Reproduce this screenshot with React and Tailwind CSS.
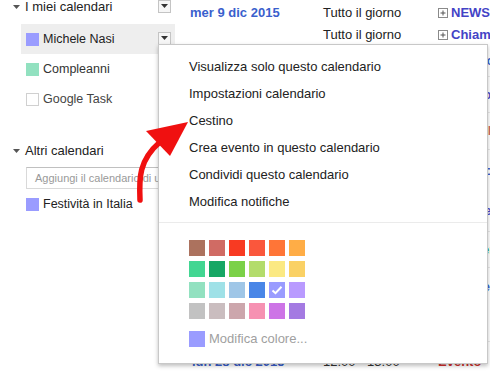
import React from "react";

const Tri = ({ fill = "#444" }) => (
  <svg width="7" height="4" viewBox="0 0 7 4"><path d="M0 0H7L3.5 4Z" fill={fill} /></svg>
);

const DropBtn = () => (
  <div className="w-[13px] h-[13px] border border-[#c4c4c4] bg-[#f6f6f6] flex items-center justify-center">
    <Tri fill="#333" />
  </div>
);

const PlusBox = () => (
  <svg width="10" height="10" viewBox="0 0 10 10" className="shrink-0">
    <rect x="0.5" y="0.5" width="9" height="9" fill="#fff" stroke="#8a8a8a" />
    <path d="M2.5 5H7.5M5 2.5V7.5" stroke="#555" strokeWidth="1" />
  </svg>
);

const colors = [
  ["#ac725e", "#d06b64", "#f83a22", "#fa573c", "#ff7537", "#ffad46"],
  ["#42d692", "#16a765", "#7bd148", "#b3dc6c", "#fbe983", "#fad165"],
  ["#92e1c0", "#9fe1e7", "#9fc6e7", "#4986e7", "#9a9cff", "#b99aff"],
  ["#c2c2c2", "#cabdbf", "#cca6ac", "#f691b2", "#cd74e6", "#a47ae2"],
];

const menuItems = [
  "Visualizza solo questo calendario",
  "Impostazioni calendario",
  "Cestino",
  "Crea evento in questo calendario",
  "Condividi questo calendario",
  "Modifica notifiche",
];

const rows = [
  { h: "h-[31px]", t: "Tutto il giorno", e: "Evento pubblico", c: "text-[#3a5fcd]", b: "border-b border-[#e8e8e8]" },
  { h: "h-[36px]", t: "Tutto il giorno", e: "Riunione settimanale", c: "text-[#4b4bc8]", b: "border-b border-[#e8e8e8]" },
  { h: "h-[37px]", t: "Tutto il giorno", e: "Compleanno di Marco", c: "text-[#d06b64]", b: "border-b border-[#e8e8e8]" },
  { h: "h-[41px]", t: "Tutto il giorno", e: "Immacolata Concezione", c: "text-[#3a5fcd]", b: "" },
  { h: "h-[41px]", t: "Tutto il giorno", e: "Promemoria", c: "text-[#4b4bc8]", b: "border-b border-[#e8e8e8]" },
  { h: "h-[36px]", t: "Tutto il giorno", e: "Scadenza pagamento", c: "text-[#16a765]", b: "border-b border-[#e8e8e8]" },
  { h: "h-[37px]", t: "Tutto il giorno", e: "Natale", c: "text-[#3a5fcd]", b: "" },
  { h: "h-[37px]", t: "Tutto il giorno", e: "Santo Stefano", c: "text-[#3a5fcd]", b: "border-b border-[#e8e8e8]" },
];

export default function App() {
  return (
    <div className="relative w-[490px] h-[374px] overflow-hidden bg-white font-['Liberation_Sans',Arial,sans-serif] text-[#222]">
      <div className="flex h-full">
        {/* Sidebar */}
        <div className="w-[175px] shrink-0 flex flex-col">
          <div className="flex items-center h-[13px] leading-[13px] text-[13px]">
            <div className="w-[13px]" />
            <Tri fill="#555" />
            <span className="ml-[5px]">I miei calendari</span>
            <div className="ml-auto mr-[4px] -mt-[1px]"><DropBtn /></div>
          </div>
          <div className="mt-[11px] ml-[21px] h-[30px] bg-[#eeeeee] flex items-center text-[12.5px] text-[#222]">
            <div className="ml-[5px] w-[13px] h-[13px] bg-[#9a9cff]" />
            <span className="ml-[4px]">Michele Nasi</span>
            <div className="ml-auto mr-[4px] -mt-[2px]"><DropBtn /></div>
          </div>
          <div className="ml-[21px] h-[30px] flex items-center text-[12.5px] text-[#333]">
            <div className="ml-[5px] w-[13px] h-[13px] bg-[#92e1c0]" />
            <span className="ml-[4px]">Compleanni</span>
          </div>
          <div className="ml-[21px] h-[30px] flex items-center text-[12.5px] text-[#444]">
            <div className="ml-[5px] w-[13px] h-[13px] border border-[#d0d0d0] bg-white" />
            <span className="ml-[4px]">Google Task</span>
          </div>
          <div className="mt-[30px] flex items-center h-[13px] leading-[13px] text-[13px]">
            <div className="w-[13px]" />
            <Tri fill="#555" />
            <span className="ml-[5px]">Altri calendari</span>
          </div>
          <div className="mt-[10px] ml-[26px] w-[160px] h-[22px] border border-[#d9d9d9] border-t-[#c0c0c0] flex items-center pl-[8px] text-[11px] text-[#999] whitespace-nowrap overflow-hidden">
            Aggiungi il calendario di un amico
          </div>
          <div className="ml-[21px] h-[30px] flex items-center text-[12.5px] text-[#222]">
            <div className="ml-[5px] w-[13px] h-[13px] bg-[#9a9cff]" />
            <span className="ml-[4px]">Festività in Italia</span>
          </div>
        </div>

        {/* Agenda list */}
        <div className="flex-1 min-w-0 flex flex-col pt-[2px] text-[13px] whitespace-nowrap overflow-hidden">
          <div className="flex items-center h-[22px] shrink-0">
            <div className="w-[148px] shrink-0 pl-[15px] font-bold text-[#3a5fcd]">mer 9 dic 2015</div>
            <div className="w-[115px] shrink-0">Tutto il giorno</div>
            <div className="flex items-center gap-[3px] shrink-0 font-bold text-[#4343c6]"><PlusBox />NEWS Tecnologia</div>
          </div>
          <div className="flex items-center h-[22px] shrink-0">
            <div className="w-[148px] shrink-0" />
            <div className="w-[115px] shrink-0">Tutto il giorno</div>
            <div className="flex items-center gap-[3px] shrink-0 font-bold text-[#4343c6]"><PlusBox />Chiamata cliente</div>
          </div>
          {rows.map((r, i) => (
            <div key={i} className={`flex items-center shrink-0 ${r.h} ${r.b}`}>
              <div className="w-[148px] shrink-0" />
              <div className="w-[115px] shrink-0">{r.t}</div>
              <div className={`flex items-center gap-[3px] shrink-0 font-bold ${r.c}`}><PlusBox />{r.e}</div>
            </div>
          ))}
          <div className="flex items-center h-[22px] shrink-0 mt-[9px]">
            <div className="w-[148px] shrink-0 pl-[17px] font-bold text-[#3a5fcd]">lun 28 dic 2015</div>
            <div className="w-[115px] shrink-0 text-[#333]">12:00 - 13:00</div>
            <div className="flex items-center gap-[3px] shrink-0 font-bold text-[#d0312d]">Evento</div>
          </div>
        </div>
      </div>

      {/* Dropdown menu */}
      <div className="absolute left-[158px] top-[44px] w-[330px] h-[320px] bg-white border border-[#c8c8c8] shadow-[0_2px_4px_rgba(0,0,0,0.25)] flex flex-col text-[13px] text-[#222]">
        <div className="pt-[8px]">
          {menuItems.map((m) => (
            <div key={m} className="h-[27px] leading-[27px] pl-[30px]">{m}</div>
          ))}
        </div>
        <div className="mt-[7px] border-t border-[#ebebeb]" />
        <div className="pt-[17px] pl-[30px] grid grid-cols-[repeat(6,16px)] gap-x-[4px] gap-y-[5px]">
          {colors.flat().map((c) => (
            <div key={c} className="w-[16px] h-[16px] flex items-center justify-center" style={{ backgroundColor: c }}>
              {c === "#9a9cff" && (
                <svg width="12" height="10" viewBox="0 0 12 10">
                  <path d="M1.5 5.5L4.5 8.2L10.5 1.8" fill="none" stroke="#fff" strokeWidth="2" />
                </svg>
              )}
            </div>
          ))}
        </div>
        <div className="mt-[10px] pl-[30px] flex items-center">
          <div className="w-[16px] h-[16px] bg-[#9a9cff]" />
          <span className="ml-[4px] text-[#a0a0a0]">Modifica colore...</span>
        </div>
      </div>

      {/* Red arrow */}
      <svg className="absolute left-0 top-0 pointer-events-none" width="490" height="374" viewBox="0 0 490 374">
        <path d="M140 200 C139 178 139 160 160 142" fill="none" stroke="#f01010" strokeWidth="5.5" strokeLinecap="round" />
        <path d="M188 122 L146 131 L170 156 Z" fill="#f01010" />
      </svg>
    </div>
  );
}
